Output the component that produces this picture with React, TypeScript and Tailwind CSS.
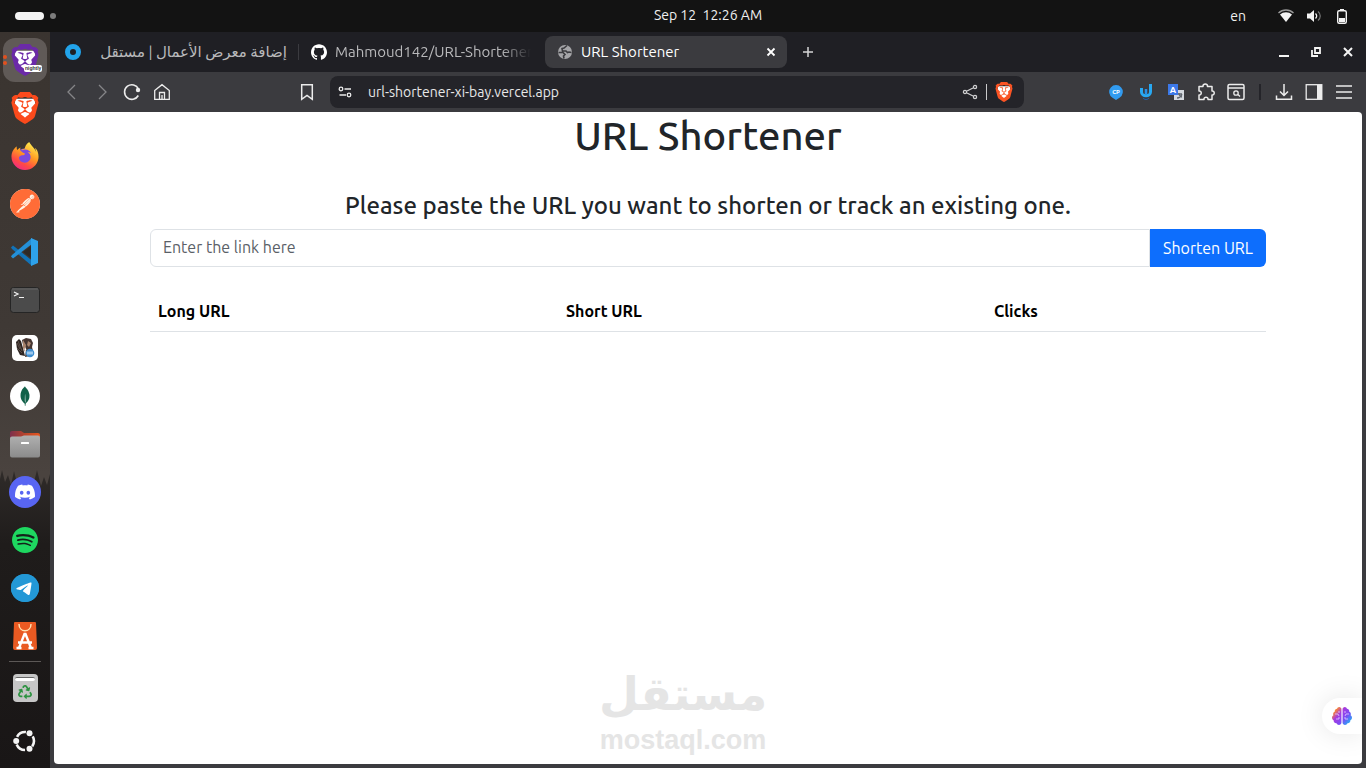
import type { ReactNode } from "react";
import { FaBrain, FaRecycle } from "react-icons/fa";
import {
  SiBrave,
  SiDiscord,
  SiFirefoxbrowser,
  SiGithub,
  SiMongodb,
  SiPostman,
  SiSpotify,
  SiTelegram,
} from "react-icons/si";

interface IconPropsType {
  className?: string;
}

interface IconButtonPropsType {
  label: string;
  className?: string;
  children: ReactNode;
}

function BraveLion({ className }: IconPropsType) {
  return (
    <span className={`grid ${className}`}>
      <svg viewBox="0 0 24 24" className="col-start-1 row-start-1 size-full">
        <path d="M5 5h14l1 5-3 8-5 4-5-4-3-8z" fill="#fff" />
      </svg>
      <SiBrave className="col-start-1 row-start-1 size-full" />
    </span>
  );
}

function Firefox() {
  return (
    <svg viewBox="0 0 24 24" className="size-7">
      <defs>
        <linearGradient id="fox" x1="0.8" y1="0" x2="0.25" y2="1">
          <stop offset="0.1" stopColor="#ffe14a" />
          <stop offset="0.45" stopColor="#ff9a22" />
          <stop offset="0.75" stopColor="#ff4a45" />
          <stop offset="1" stopColor="#f0288a" />
        </linearGradient>
      </defs>
      <circle cx="11.5" cy="12.5" r="7" fill="#7a4be0" />
      <SiFirefoxbrowser size={24} fill="url(#fox)" />
    </svg>
  );
}

function Postman() {
  return (
    <span className="grid size-[30px] place-items-center rounded-full bg-[#fff3e6] text-[#ff6c37]">
      <SiPostman className="size-[30px]" />
    </span>
  );
}

function VsCode() {
  return (
    <svg viewBox="0 0 28 28" className="size-7">
      <path d="M0 9.500l2-2 19 15V28L1 11z" fill="#1273b8" />
      <path d="M0 18.500l2 2L21 6V0L1 17z" fill="#2490d8" />
      <path d="M20 0l7 3v22l-7 3z" fill="#2ea2ea" />
      <path d="M20 8l-8 6 8 6z" fill="#2f2a27" />
    </svg>
  );
}

function Terminal() {
  return (
    <svg viewBox="0 0 30 26" className="h-[26px] w-[30px]">
      <rect x="0.5" y="0.5" width="29" height="25" rx="3" fill="#4b4b4b" stroke="#252525" />
      <path d="M2 2h26" stroke="#666" />
      <path d="M4 5l4 2-4 2M9 10.500h5" stroke="#f2f2f2" strokeWidth="1.2" fill="none" />
    </svg>
  );
}

function Beaver() {
  return (
    <svg viewBox="0 0 26 26" className="size-[26px]">
      <rect width="26" height="26" rx="5" fill="#fff" />
      <path d="M4 7l3-3 2 2 2 7 2 8-5-1-3-6z" fill="#2c2421" />
      <path d="M5 8l3 6M6 6l4 10M5 13l5 5" stroke="#7c6a60" strokeWidth="0.6" />
      <path d="M10 5l4-2 5 1 2 4-1 4 1 4-3 5-5 1 1-7-3-5z" fill="#453531" />
      <path d="M11 5l3 5-1 7-2-4zM16 6l3 2-2 4-2-2z" fill="#a8836c" />
      <path d="M13 12l1.500 3h-2z" fill="#fff" />
      <circle cx="18" cy="18" r="4.300" fill="#3f8ed0" />
      <path d="M15 16.500h6v3h-6z" fill="#9cc7ec" />
    </svg>
  );
}

function Mongo() {
  return (
    <span className="grid size-[30px] place-items-center rounded-full bg-white text-[#116149]">
      <SiMongodb className="size-5" />
    </span>
  );
}

function Files() {
  return (
    <svg viewBox="0 0 32 28" className="h-7 w-8">
      <defs>
        <linearGradient id="tab" x1="0" x2="1">
          <stop offset="0" stopColor="#7c2f4d" />
          <stop offset="0.5" stopColor="#b8442c" />
          <stop offset="1" stopColor="#e8571f" />
        </linearGradient>
        <linearGradient id="front" x1="0" y1="0" x2="0" y2="1">
          <stop offset="0" stopColor="#b0b0b0" />
          <stop offset="1" stopColor="#8b8b8b" />
        </linearGradient>
      </defs>
      <path d="M1 3a2 2 0 012-2h9l3 2h14a2 2 0 012 2v6H1z" fill="url(#tab)" />
      <path d="M1 8.500a2 2 0 012-2h9l3-1h14a2 2 0 012 2V25.500a2 2 0 01-2 2H3a2 2 0 01-2-2z" fill="url(#front)" />
      <rect x="12" y="12" width="8" height="2" rx="0.5" fill="#fff" />
    </svg>
  );
}

function Discord() {
  return (
    <span className="grid size-8 place-items-center rounded-full bg-[#5865f2] text-white">
      <SiDiscord className="size-5" />
    </span>
  );
}

function Spotify() {
  return (
    <span className="grid size-[26px] rounded-full bg-[#14211a] text-[#1ed760]">
      <SiSpotify className="size-[26px]" />
    </span>
  );
}

function Telegram() {
  return (
    <span className="grid size-7 rounded-full bg-[#2398d6] text-[#2398d6]">
      <svg viewBox="0 0 24 24" className="col-start-1 row-start-1 size-7">
        <circle cx="12" cy="12" r="10" fill="#fff" />
      </svg>
      <SiTelegram className="col-start-1 row-start-1 size-7" />
    </span>
  );
}

function AppCenter() {
  return (
    <svg viewBox="0 0 24 28" className="h-7 w-6">
      <path d="M2 0h20a1 1 0 011 1l1 25a2 2 0 01-2 2H2a2 2 0 01-2-2L1 1a1 1 0 011-1z" fill="#ea5a22" />
      <path d="M6 2c0 9 12 9 12 0" stroke="#ffe0b0" strokeWidth="1.500" fill="none" />
      <path d="M6 26l5.500-14h1L18 26M5 20.500h14M3.500 26h5M15.500 26h5" stroke="#fff" strokeWidth="2.400" fill="none" />
    </svg>
  );
}

function Trash() {
  return (
    <span className="flex h-7 w-[25px] flex-col items-center gap-1 rounded bg-[#c6c6c6] pt-[3px]">
      <span className="h-1 w-5 shrink-0 rounded-sm border-t border-[#666] bg-white" />
      <FaRecycle className="size-[14px] text-[#2e9342]" />
    </span>
  );
}

function UbuntuRing() {
  return (
    <svg viewBox="0 0 24 24" className="size-6">
      <circle
        cx="12"
        cy="12"
        r="9"
        fill="none"
        stroke="#f4f4f4"
        strokeWidth="2.600"
        strokeDasharray="10.600 8.250"
        strokeDashoffset="-4.400"
        transform="rotate(-180 12 12)"
      />
      <circle cx="3.200" cy="12" r="3" fill="#f4f4f4" />
      <circle cx="16.500" cy="4.200" r="3" fill="#f4f4f4" />
      <circle cx="16.500" cy="19.800" r="3" fill="#f4f4f4" />
    </svg>
  );
}

const dockApps = [
  { name: "Firefox", icon: <Firefox /> },
  { name: "Postman", icon: <Postman /> },
  { name: "Visual Studio Code", icon: <VsCode /> },
  { name: "Terminal", icon: <Terminal /> },
  { name: "DBeaver", icon: <Beaver /> },
  { name: "MongoDB Compass", icon: <Mongo /> },
  { name: "Files", icon: <Files /> },
  { name: "Discord", icon: <Discord /> },
  { name: "Spotify", icon: <Spotify /> },
  { name: "Telegram", icon: <Telegram /> },
  { name: "App Center", icon: <AppCenter /> },
];

function DockButton({ label, children }: IconButtonPropsType) {
  return (
    <button type="button" aria-label={label} className="grid h-12 w-full shrink-0 place-items-center">
      {children}
    </button>
  );
}

function Dock() {
  return (
    <nav
      aria-label="Dock"
      className="relative flex w-[50px] shrink-0 flex-col bg-linear-to-b from-[#3a3430] via-[#3f3935] via-40% to-[#4a433f] to-60% pt-1"
    >
      <svg
        viewBox="0 0 50 310"
        preserveAspectRatio="none"
        className="absolute inset-x-0 bottom-0 h-[42%] w-full"
      >
        <defs>
          <linearGradient id="woods" x1="0" y1="0" x2="0" y2="1">
            <stop offset="0" stopColor="#2f2b29" />
            <stop offset="0.25" stopColor="#1f1c1b" />
            <stop offset="1" stopColor="#191616" />
          </linearGradient>
        </defs>
        <path
          d="M0 20l2-9 3 12 3-7 3 10 3-14 4 16 3-3 3 8 4-14 3 12 3-8 3-12 4 16 3-9 3 8 3-11v295H0z"
          fill="url(#woods)"
        />
      </svg>
      <div className="relative flex grow flex-col">
        <div className="flex h-12 shrink-0 flex-col items-center">
          <button
            type="button"
            aria-label="Brave Nightly"
            className="relative mt-[2px] grid size-11 place-items-center rounded-xl bg-[#605a57]"
          >
            <BraveLion className="size-8 text-[#6b2aa8]" />
            <span className="absolute top-[27px] left-[21px] rounded-xs bg-white px-px font-['Liberation_Sans'] text-[5px] leading-[7px] font-bold text-[#333]">
              nightly
            </span>
            <span className="absolute top-[17px] left-0 size-1 rounded-full bg-[#e2501e]" />
            <span className="absolute top-[23px] left-0 size-1 rounded-full bg-[#e2501e]" />
          </button>
        </div>
        <DockButton label="Brave">
          <BraveLion className="size-8 text-[#fb4a1c]" />
        </DockButton>
        {dockApps.map(({ name, icon }) => (
          <DockButton key={name} label={name}>
            {icon}
          </DockButton>
        ))}
        <hr className="mx-auto mt-px mb-[2px] w-8 border-[#5c5856]" />
        <DockButton label="Trash">
          <Trash />
        </DockButton>
        <div className="mt-auto pb-[3px]">
          <DockButton label="Show Apps">
            <UbuntuRing />
          </DockButton>
        </div>
      </div>
    </nav>
  );
}

function SystemBar() {
  return (
    <header className="grid h-8 shrink-0 grid-cols-[1fr_auto_1fr] items-center bg-[#131313] text-sm text-[#f0f0f0]">
      <div className="flex items-center gap-[6px] pl-[15px]">
        <span className="h-2 w-[29px] rounded-full bg-[#f4f4f4]" />
        <span className="size-[6px] rounded-full bg-[#7d7d7d]" />
      </div>
      <time className="ml-[50px] pb-[2px] whitespace-pre">Sep 12  12:26 AM</time>
      <div className="flex items-center justify-end pr-4">
        <span className="mr-8">en</span>
        <svg viewBox="0 0 16 16" className="mr-3 size-4">
          <path d="M0.500 5a11 11 0 0115 0" stroke="#999" strokeWidth="1.400" fill="none" />
          <path d="M2 6.500a9 9 0 0112 0L8 14z" fill="#f4f4f4" />
        </svg>
        <svg viewBox="0 0 16 16" className="mr-3 size-4">
          <path d="M1 5.500h3L8 2v12l-4-3.500H1z" fill="#f4f4f4" />
          <path d="M9.500 5.500c1.500 1.500 1.500 3.500 0 5" stroke="#f4f4f4" strokeWidth="1.400" fill="none" />
          <path d="M12 3.500c3 2.500 3 6.500 0 9" stroke="#777" strokeWidth="1.200" fill="none" />
        </svg>
        <svg viewBox="0 0 16 16" className="size-4">
          <rect x="3.700" y="2.700" width="8.600" height="12.600" rx="1.500" stroke="#f4f4f4" strokeWidth="1.400" fill="none" />
          <path d="M6 1h4v1.500H6zM5 10h6v4H5z" fill="#f4f4f4" />
        </svg>
      </div>
    </header>
  );
}

function TabStrip() {
  return (
    <div className="flex h-10 shrink-0 items-center bg-[#1f1f24] text-[15px] leading-5 text-[#b9b9bb]">
      <div className="flex w-[248px] items-center justify-between pr-[11px] pl-[15px]">
        <span className="size-4 rounded-full border-[5px] border-[#22a3ea]" />
        <span dir="rtl" className="whitespace-nowrap">
          إضافة معرض الأعمال | مستقل
        </span>
      </div>
      <span className="h-4 w-px bg-[#3b3b40]" />
      <div className="flex w-[246px] items-center gap-2 pr-[14px] pl-3">
        <SiGithub className="size-4 shrink-0 text-white" />
        <span className="grow overflow-hidden mask-r-from-85% whitespace-nowrap">
          Mahmoud142/URL-Shortener
        </span>
      </div>
      <div className="flex h-8 w-[242px] items-center gap-2 rounded-lg bg-[#3b3b3f] pr-[11px] pl-3 text-white">
        <svg viewBox="0 0 16 16" className="size-4">
          <circle cx="8" cy="8" r="7" fill="#a5a5a8" />
          <path d="M10 1.500L7 4l-2 .5.500 2.500H9l1.500 1.500L12 8l2.500.5M1.500 8.500H6l2 2-1.500 1.500.5 2.500" stroke="#3b3b3f" strokeWidth="1.600" fill="none" />
        </svg>
        <span className="grow">URL Shortener</span>
        <button type="button" aria-label="Close tab">
          <svg viewBox="0 0 10 10" className="size-[10px]">
            <path d="M1.500 1.500l7 7M8.500 1.500l-7 7" stroke="#fff" strokeWidth="1.800" />
          </svg>
        </button>
      </div>
      <button type="button" aria-label="New tab" className="ml-4">
        <svg viewBox="0 0 10 10" className="size-[10px]">
          <path d="M5 0v10M0 5h10" stroke="#d5d5d5" strokeWidth="1.500" />
        </svg>
      </button>
      <div className="ml-auto flex items-center gap-5 pr-3">
        <button type="button" aria-label="Minimize">
          <svg viewBox="0 0 12 12" className="size-3">
            <path d="M1 10h10" stroke="#f4f4f4" strokeWidth="2" />
          </svg>
        </button>
        <button type="button" aria-label="Restore">
          <svg viewBox="0 0 12 12" className="size-3">
            <path d="M5 2h5v5H5zM2 4v6h6" stroke="#f4f4f4" strokeWidth="1.800" fill="none" />
          </svg>
        </button>
        <button type="button" aria-label="Close window">
          <svg viewBox="0 0 12 12" className="size-3">
            <path d="M2 2l8 8M10 2l-8 8" stroke="#f4f4f4" strokeWidth="2" />
          </svg>
        </button>
      </div>
    </div>
  );
}

function ToolButton({ label, className = "", children }: IconButtonPropsType) {
  return (
    <button
      type="button"
      aria-label={label}
      className={`grid h-8 w-[30px] shrink-0 place-items-center ${className}`}
    >
      <svg viewBox="0 0 18 18" className="size-[18px]" fill="none" stroke="currentColor" strokeWidth="1.300">
        {children}
      </svg>
    </button>
  );
}

function Toolbar() {
  return (
    <div className="flex h-10 shrink-0 items-center px-[7px] text-[#ececec]">
      <ToolButton label="Back" className="text-[#858588]">
        <path d="M12 2L5 9l7 7" />
      </ToolButton>
      <ToolButton label="Forward" className="text-[#858588]">
        <path d="M6 2l7 7-7 7" />
      </ToolButton>
      <ToolButton label="Reload">
        <path d="M15.300 12.500A7.300 7.300 0 1115.500 6" strokeWidth="1.600" />
        <circle cx="15" cy="7" r="2.200" fill="currentColor" stroke="none" />
      </ToolButton>
      <ToolButton label="Home">
        <path d="M1.700 7.500L9 1.700l7.300 5.800v8.800H1.700zM6.500 16V9.500h5V16M9 12v4" />
      </ToolButton>
      <ToolButton label="Bookmark this page" className="ml-[115px]">
        <path d="M3.700 1.700h10.600v14.600L9 12.500l-5.300 3.800z" strokeWidth="1.500" />
      </ToolButton>
      <div className="mr-[77px] ml-2 flex h-8 min-w-0 grow items-center rounded-lg bg-[#242429] pr-1">
        <ToolButton label="Site information">
          <circle cx="5" cy="6" r="1.800" />
          <circle cx="13" cy="12" r="1.800" />
          <path d="M8.500 6H15M3.500 12H10" />
        </ToolButton>
        <input
          aria-label="Address"
          readOnly
          value="url-shortener-xi-bay.vercel.app"
          className="ml-2 min-w-0 grow bg-transparent text-sm text-[#e8e8e8] outline-none"
        />
        <ToolButton label="Share" className="text-[#cfcfd1]">
          <circle cx="4" cy="9" r="1.600" />
          <circle cx="14" cy="4" r="1.600" />
          <circle cx="14" cy="14" r="1.600" />
          <path d="M6 8l6-3M6 10l6 3" />
        </ToolButton>
        <span className="mx-px h-4 w-px bg-[#c9c9cb]" />
        <button type="button" aria-label="Brave Shields" className="grid w-8 place-items-center">
          <BraveLion className="size-5 text-[#fb5424]" />
        </button>
      </div>
      <ToolButton label="Competitive Companion">
        <path d="M9 17l-3.500-2.300a6.800 6.800 0 117 0z" fill="#319bf0" stroke="none" />
        <text x="9" y="11" textAnchor="middle" fontSize="6" fontWeight="700" fill="#fff" stroke="none">
          CP
        </text>
      </ToolButton>
      <ToolButton label="Ujeebu">
        <path d="M4.500 5v4c0 5 9 5 9 0V1" stroke="#28a8f2" strokeWidth="3" />
        <path d="M9 6v5" stroke="#2b8fe6" strokeWidth="2.500" />
        <path d="M6 15c2 2 4 2 6 0" stroke="#1767bd" strokeWidth="1" />
      </ToolButton>
      <ToolButton label="Translate">
        <rect x="7" y="7" width="10" height="10" fill="#d5d9df" stroke="none" />
        <path d="M10 11h5M12 10c0 3 2 4 3 4M15 11c-1 3-3 4-5 4" stroke="#60666f" />
        <rect x="1" y="1" width="10" height="11" fill="#3c78e8" stroke="none" />
        <text x="6" y="10" textAnchor="middle" fontSize="9" fontWeight="700" fill="#fff" stroke="none">
          A
        </text>
      </ToolButton>
      <ToolButton label="Extensions">
        <path
          d="M2 3.500h4c-.5-3.300 5-3.300 4.500 0H15V8c3-.3 3 4.300 0 4v4.500h-4c.5-3-4.500-3-4 0H2V12c3 .3 3-4.300 0-4z"
          strokeWidth="1.500"
          strokeLinejoin="round"
        />
      </ToolButton>
      <ToolButton label="Search tabs">
        <rect x="1" y="1.500" width="16" height="15" rx="1.500" strokeWidth="1.500" />
        <path d="M1 5h16M11 11.500l2 2" />
        <circle cx="9" cy="10" r="2.200" />
      </ToolButton>
      <span className="mx-2 h-4 w-[2px] bg-[#242429]" />
      <ToolButton label="Downloads">
        <path d="M9 1v11M5 8.500L9 12.500l4-4M1.500 12.500v3.800h15v-3.800" strokeWidth="1.500" />
      </ToolButton>
      <ToolButton label="Sidebar">
        <rect x="1.200" y="1.700" width="15.600" height="14.600" />
        <path d="M12 2h5v14h-5z" fill="currentColor" stroke="none" />
      </ToolButton>
      <ToolButton label="Menu">
        <path d="M1 3h16M1 9h16M1 15h16" strokeWidth="1.500" />
      </ToolButton>
    </div>
  );
}

function ShortenerPage() {
  return (
    <main className="relative mx-1 mb-1 grow overflow-hidden rounded-sm bg-white text-[#212529]">
      <div className="mx-auto max-w-[1140px] px-3">
        <h1 className="text-center text-[40px] leading-[48px] font-medium">URL Shortener</h1>
        <form className="mt-[31px]">
          <label htmlFor="link" className="mb-[9px] block text-center text-2xl leading-[29px] font-medium">
            Please paste the URL you want to shorten or track an existing one.
          </label>
          <div className="flex">
            <input
              id="link"
              type="text"
              placeholder="Enter the link here"
              className="h-[38px] min-w-0 grow rounded-l-md border border-[#dee2e6] px-3 pb-[2px] text-base placeholder:text-[#5a6067]"
            />
            <button
              type="button"
              className="h-[38px] w-[116px] shrink-0 rounded-r-md bg-[#0d6efd] text-base whitespace-nowrap text-white"
            >
              Shorten URL
            </button>
          </div>
        </form>
        <table className="mt-6 w-full table-fixed border-collapse text-left text-base text-black">
          <colgroup>
            <col className="w-[408px]" />
            <col className="w-[428px]" />
            <col />
          </colgroup>
          <thead>
            <tr className="border-b border-[#dee2e6]">
              <th scope="col" className="p-2 font-bold">Long URL</th>
              <th scope="col" className="p-2 font-bold">Short URL</th>
              <th scope="col" className="p-2 font-bold">Clicks</th>
            </tr>
          </thead>
          <tbody />
        </table>
      </div>
      <button
        type="button"
        aria-label="Assistant"
        className="absolute right-0 bottom-[30px] grid h-9 w-10 place-items-center rounded-l-full bg-white shadow-[0_0_28px_rgba(0,0,0,0.1)]"
      >
        <svg viewBox="0 0 20 20" className="size-5">
          <defs>
            <linearGradient id="brain" gradientUnits="userSpaceOnUse" x1="40" y1="40" x2="540" y2="480">
              <stop offset="0.1" stopColor="#ff8a2a" />
              <stop offset="0.35" stopColor="#a63be0" />
              <stop offset="0.65" stopColor="#7a4df5" />
              <stop offset="1" stopColor="#16c0f5" />
            </linearGradient>
          </defs>
          <FaBrain size={20} fill="url(#brain)" />
          <path
            d="M3 8h3l1 2M4 13h3v-2M7 5v2M17 8h-3l-1 2M16 13h-3v-2M13 5v2"
            stroke="#e6ccff"
            strokeWidth="0.800"
            fill="none"
          />
        </svg>
      </button>
    </main>
  );
}

function Watermark() {
  return (
    <div className="pointer-events-none absolute inset-x-0 bottom-3 flex flex-col items-center font-bold text-[#e5e5e5]">
      <span dir="rtl" className="font-['DejaVu_Sans'] text-[46px] leading-[60px]">مستقل</span>
      <span className="font-['Liberation_Sans'] text-[27px] leading-8">mostaql.com</span>
    </div>
  );
}

export function App() {
  return (
    <div className="relative flex min-h-screen flex-col bg-[#3b3b3f] font-['Ubuntu','Noto_Sans','DejaVu_Sans',sans-serif]">
      <SystemBar />
      <div className="flex grow">
        <Dock />
        <div className="flex min-w-0 grow flex-col">
          <TabStrip />
          <Toolbar />
          <ShortenerPage />
        </div>
      </div>
      <Watermark />
    </div>
  );
}

export default App;
